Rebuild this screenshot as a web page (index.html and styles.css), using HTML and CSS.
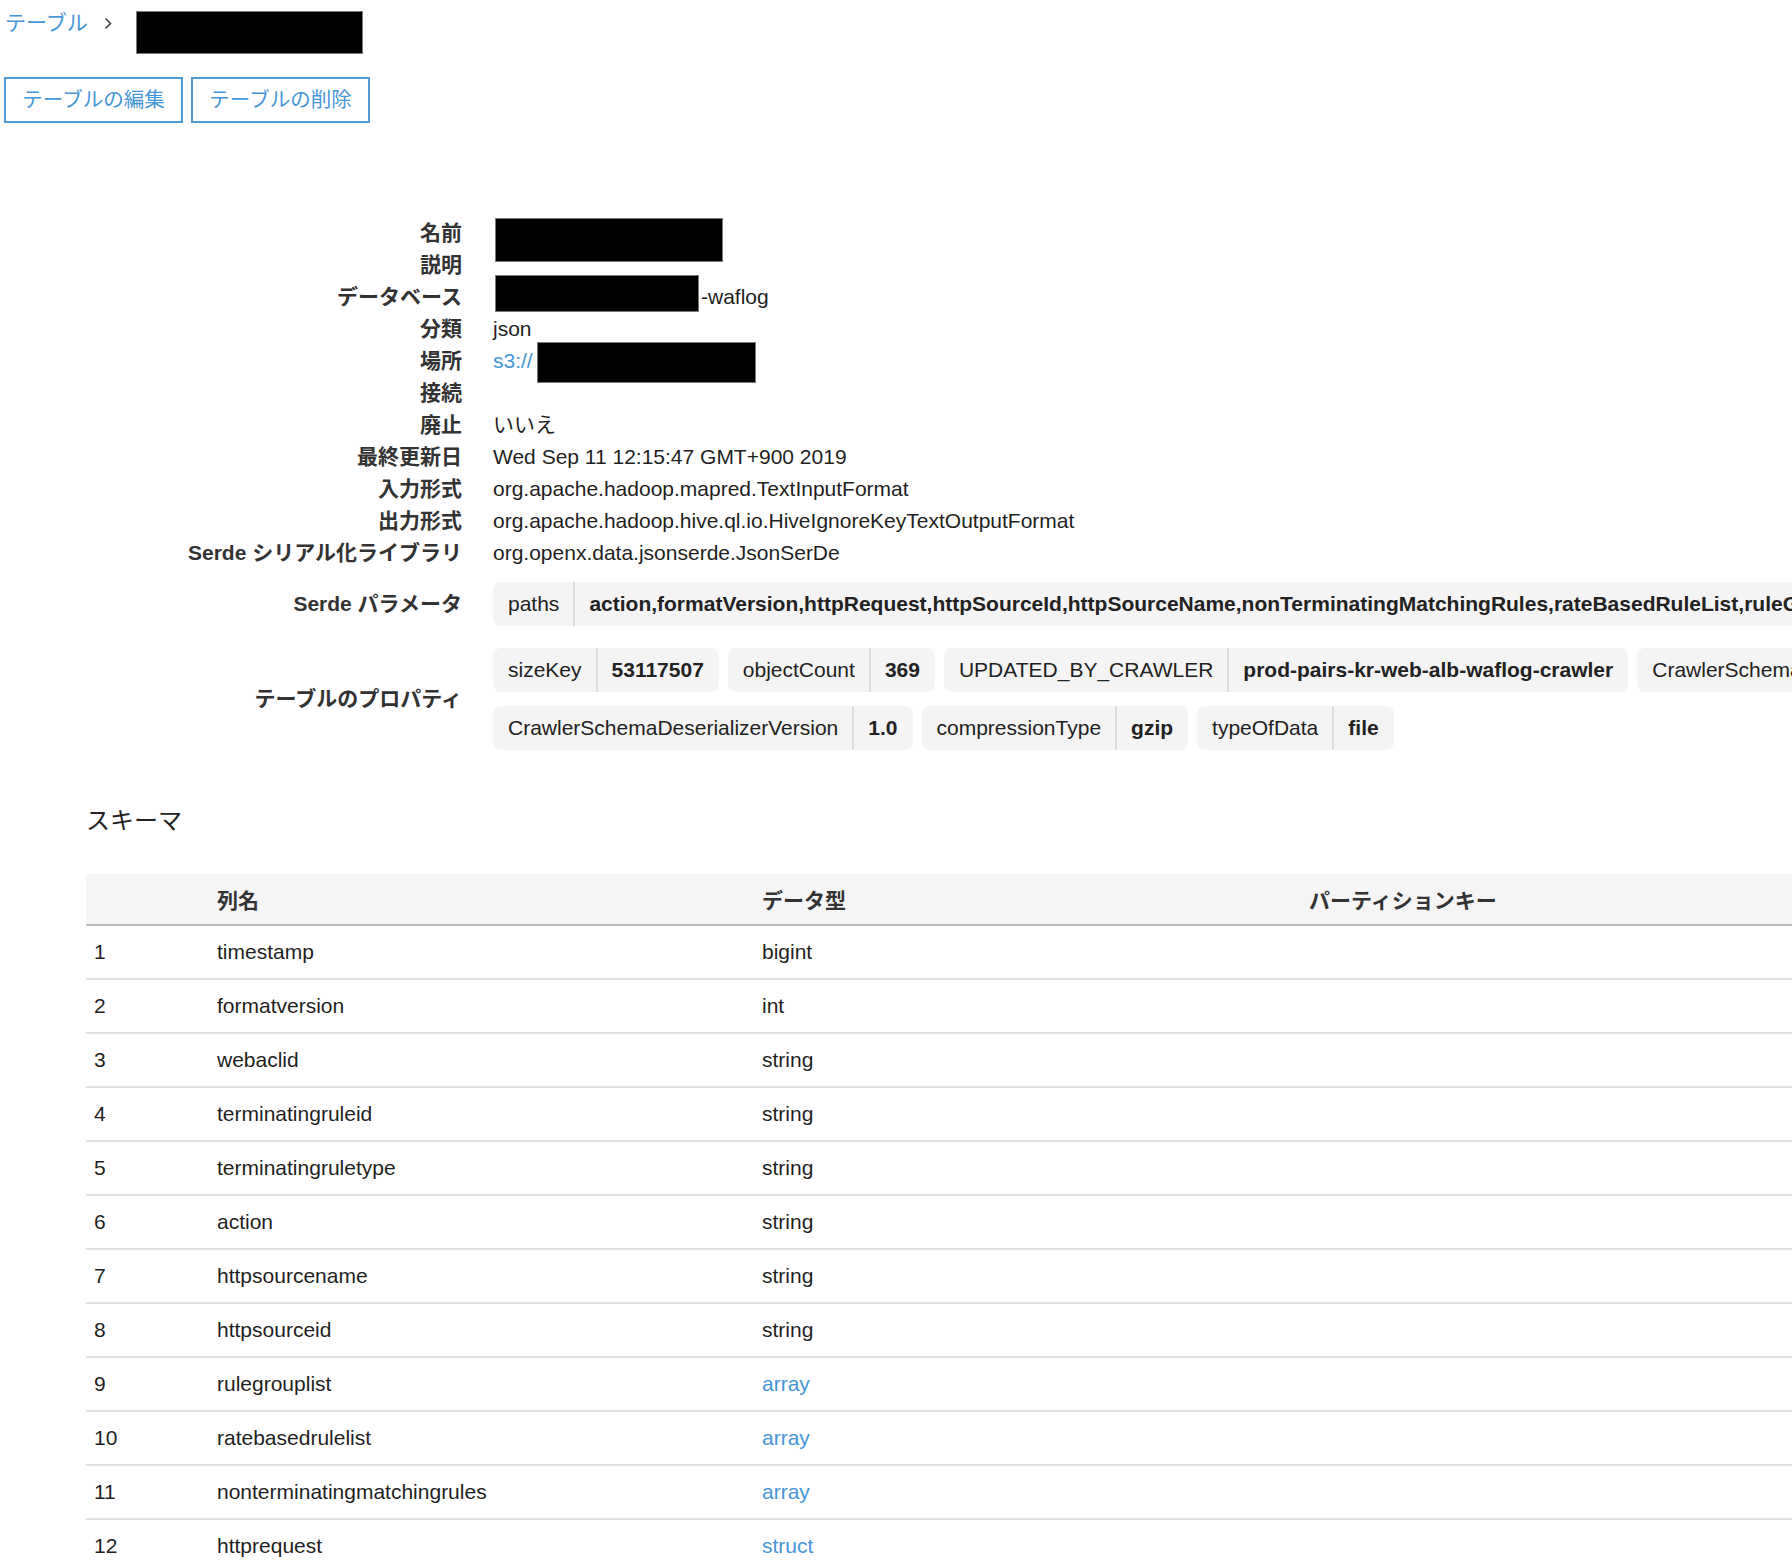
FILE: index.html
```html
<!DOCTYPE html>
<html lang="ja">
<head>
<meta charset="utf-8">
<title>テーブル</title>
<link rel="stylesheet" href="styles.css">
</head>
<body>
<div class="page">
  <nav class="crumbs">
    <a class="link crumb-link">テーブル</a>
    <svg class="chev" width="8" height="13" viewBox="0 0 8 13"><path d="M1.5 1.5 L6.5 6.5 L1.5 11.5" fill="none" stroke="#444" stroke-width="1.6"/></svg>
    <span class="redact redact-title"></span>
  </nav>
  <div class="actions">
    <button class="btn">テーブルの編集</button>
    <button class="btn">テーブルの削除</button>
  </div>

  <div class="details">
    <div class="row"><div class="lbl">名前</div><div class="val"><span class="redact redact-name"></span></div></div>
    <div class="row"><div class="lbl">説明</div><div class="val"></div></div>
    <div class="row"><div class="lbl">データベース</div><div class="val"><span class="redact redact-db"></span>-waflog</div></div>
    <div class="row"><div class="lbl">分類</div><div class="val">json</div></div>
    <div class="row"><div class="lbl">場所</div><div class="val"><a class="link">s3://</a><span class="redact redact-s3"></span></div></div>
    <div class="row"><div class="lbl">接続</div><div class="val"></div></div>
    <div class="row"><div class="lbl">廃止</div><div class="val">いいえ</div></div>
    <div class="row"><div class="lbl">最終更新日</div><div class="val">Wed Sep 11 12:15:47 GMT+900 2019</div></div>
    <div class="row"><div class="lbl">入力形式</div><div class="val">org.apache.hadoop.mapred.TextInputFormat</div></div>
    <div class="row"><div class="lbl">出力形式</div><div class="val">org.apache.hadoop.hive.ql.io.HiveIgnoreKeyTextOutputFormat</div></div>
    <div class="row"><div class="lbl">Serde シリアル化ライブラリ</div><div class="val">org.openx.data.jsonserde.JsonSerDe</div></div>

    <div class="row row-params">
      <div class="lbl">Serde パラメータ</div>
      <div class="val">
        <div class="pills">
          <div class="pill"><span class="k">paths</span><span class="v">action,formatVersion,httpRequest,httpSourceId,httpSourceName,nonTerminatingMatchingRules,rateBasedRuleList,ruleGroupList,terminatingRuleId,terminatingRuleType,timestamp,webaclId</span></div>
        </div>
      </div>
    </div>

    <div class="row row-props">
      <div class="lbl">テーブルのプロパティ</div>
      <div class="val">
        <div class="pills pills-wrap">
          <div class="pill"><span class="k">sizeKey</span><span class="v">53117507</span></div>
          <div class="pill"><span class="k">objectCount</span><span class="v">369</span></div>
          <div class="pill"><span class="k">UPDATED_BY_CRAWLER</span><span class="v">prod-pairs-kr-web-alb-waflog-crawler</span></div>
          <div class="pill"><span class="k">CrawlerSchemaSerializerVersion</span><span class="v">1.0</span></div>
          <div class="pill"><span class="k">CrawlerSchemaDeserializerVersion</span><span class="v">1.0</span></div>
          <div class="pill"><span class="k">compressionType</span><span class="v">gzip</span></div>
          <div class="pill"><span class="k">typeOfData</span><span class="v">file</span></div>
        </div>
      </div>
    </div>
  </div>

  <h2 class="schema-title">スキーマ</h2>
  <table class="schema">
    <colgroup>
      <col class="c-num"><col class="c-name"><col class="c-type"><col class="c-part">
    </colgroup>
    <thead>
      <tr><th></th><th>列名</th><th>データ型</th><th>パーティションキー</th></tr>
    </thead>
    <tbody>
      <tr><td>1</td><td>timestamp</td><td>bigint</td><td></td></tr>
      <tr><td>2</td><td>formatversion</td><td>int</td><td></td></tr>
      <tr><td>3</td><td>webaclid</td><td>string</td><td></td></tr>
      <tr><td>4</td><td>terminatingruleid</td><td>string</td><td></td></tr>
      <tr><td>5</td><td>terminatingruletype</td><td>string</td><td></td></tr>
      <tr><td>6</td><td>action</td><td>string</td><td></td></tr>
      <tr><td>7</td><td>httpsourcename</td><td>string</td><td></td></tr>
      <tr><td>8</td><td>httpsourceid</td><td>string</td><td></td></tr>
      <tr><td>9</td><td>rulegrouplist</td><td><a class="link">array</a></td><td></td></tr>
      <tr><td>10</td><td>ratebasedrulelist</td><td><a class="link">array</a></td><td></td></tr>
      <tr><td>11</td><td>nonterminatingmatchingrules</td><td><a class="link">array</a></td><td></td></tr>
      <tr><td>12</td><td>httprequest</td><td><a class="link">struct</a></td><td></td></tr>
      <tr><td>13</td><td>rulegroupid</td><td>string</td><td></td></tr>
    </tbody>
  </table>
</div>
</body>
</html>
```

FILE: styles.css
```css
html {
  overflow: hidden;
}
body {
  margin: 0;
  background: #ffffff;
  color: #1f1f1f;
  font-family: "Liberation Sans", Arial, "Noto Sans CJK JP", sans-serif;
  font-size: 21px;
}
.page {
  padding: 11px 0 0 4px;
  width: 2000px;
}
.link {
  color: #4796d6;
  text-decoration: none;
}
.redact {
  display: inline-block;
  background: #000;
  border: 1px solid #7a7a7a;
  box-sizing: border-box;
  vertical-align: top;
}

/* breadcrumb */
.crumbs {
  display: flex;
  align-items: flex-start;
  line-height: 24px;
  height: 42px;
}
.crumb-link {
  margin-left: 1px;
}
.chev {
  margin: 6px 0 0 16px;
}
.redact-title {
  width: 227px;
  height: 43px;
  margin-left: 24px;
}

/* buttons */
.actions {
  display: flex;
  gap: 8px;
  margin-top: 24px;
}
.btn {
  font-family: "Liberation Sans", Arial, "Noto Sans CJK JP", sans-serif;
  font-size: 20.5px;
  color: #4796d6;
  background: #fff;
  border: 2px solid #4f9bd8;
  height: 46px;
  width: 179px;
  padding: 0;
  line-height: 42px;
}

/* details */
.details {
  margin: 94px 0 0 82px;
  display: flex;
  flex-direction: column;
}
.row {
  display: grid;
  grid-template-columns: 376px 1fr;
  column-gap: 31px;
  align-items: center;
  min-height: 32px;
  line-height: 32px;
}
.lbl {
  text-align: right;
  font-weight: bold;
  color: #333;
}
.val {
  color: #1f1f1f;
  white-space: nowrap;
}
.redact-name {
  width: 228px;
  height: 44px;
  margin: 1px 0 -13px 2px;
}
.redact-db {
  width: 204px;
  height: 37px;
  margin: -6px 2px -1px 2px;
}
.redact-s3 {
  width: 219px;
  height: 41px;
  margin: -3px 0 -6px 4px;
}

.row-params {
  margin-top: 13px;
}
.row-props {
  margin-top: 22px;
}
.pills {
  display: flex;
  gap: 14px 9px;
}
.pills-wrap {
  flex-wrap: wrap;
  width: 1600px;
}
.pill {
  display: flex;
  align-items: stretch;
  background: #f4f4f4;
  border-radius: 8px;
  height: 44px;
  line-height: 44px;
  color: #222;
}
.pill .k {
  padding: 0 14px 0 15px;
}
.pill .v {
  padding: 0 15px 0 14px;
  font-weight: bold;
  border-left: 2px solid #dcdcdc;
}

/* schema */
.schema-title {
  margin: 55px 0 0 82px;
  font-size: 24px;
  font-weight: normal;
  line-height: 32px;
  color: #222;
}
.schema {
  margin: 37px 0 0 82px;
  border-collapse: collapse;
  table-layout: fixed;
  width: 1800px;
}
.c-num { width: 119px; }
.c-name { width: 545px; }
.c-type { width: 547px; }
.c-part { width: 589px; }
.schema th {
  background: #f5f5f5;
  height: 50px;
  padding: 0 12px;
  text-align: left;
  font-weight: bold;
  color: #333;
  border-bottom: 2px solid #bdbdbd;
}
.schema td {
  height: 52px;
  padding: 0 12px;
  border-bottom: 2px solid #e0e0e0;
  color: #1f1f1f;
}
.schema td:first-child {
  padding-left: 8px;
}
```
